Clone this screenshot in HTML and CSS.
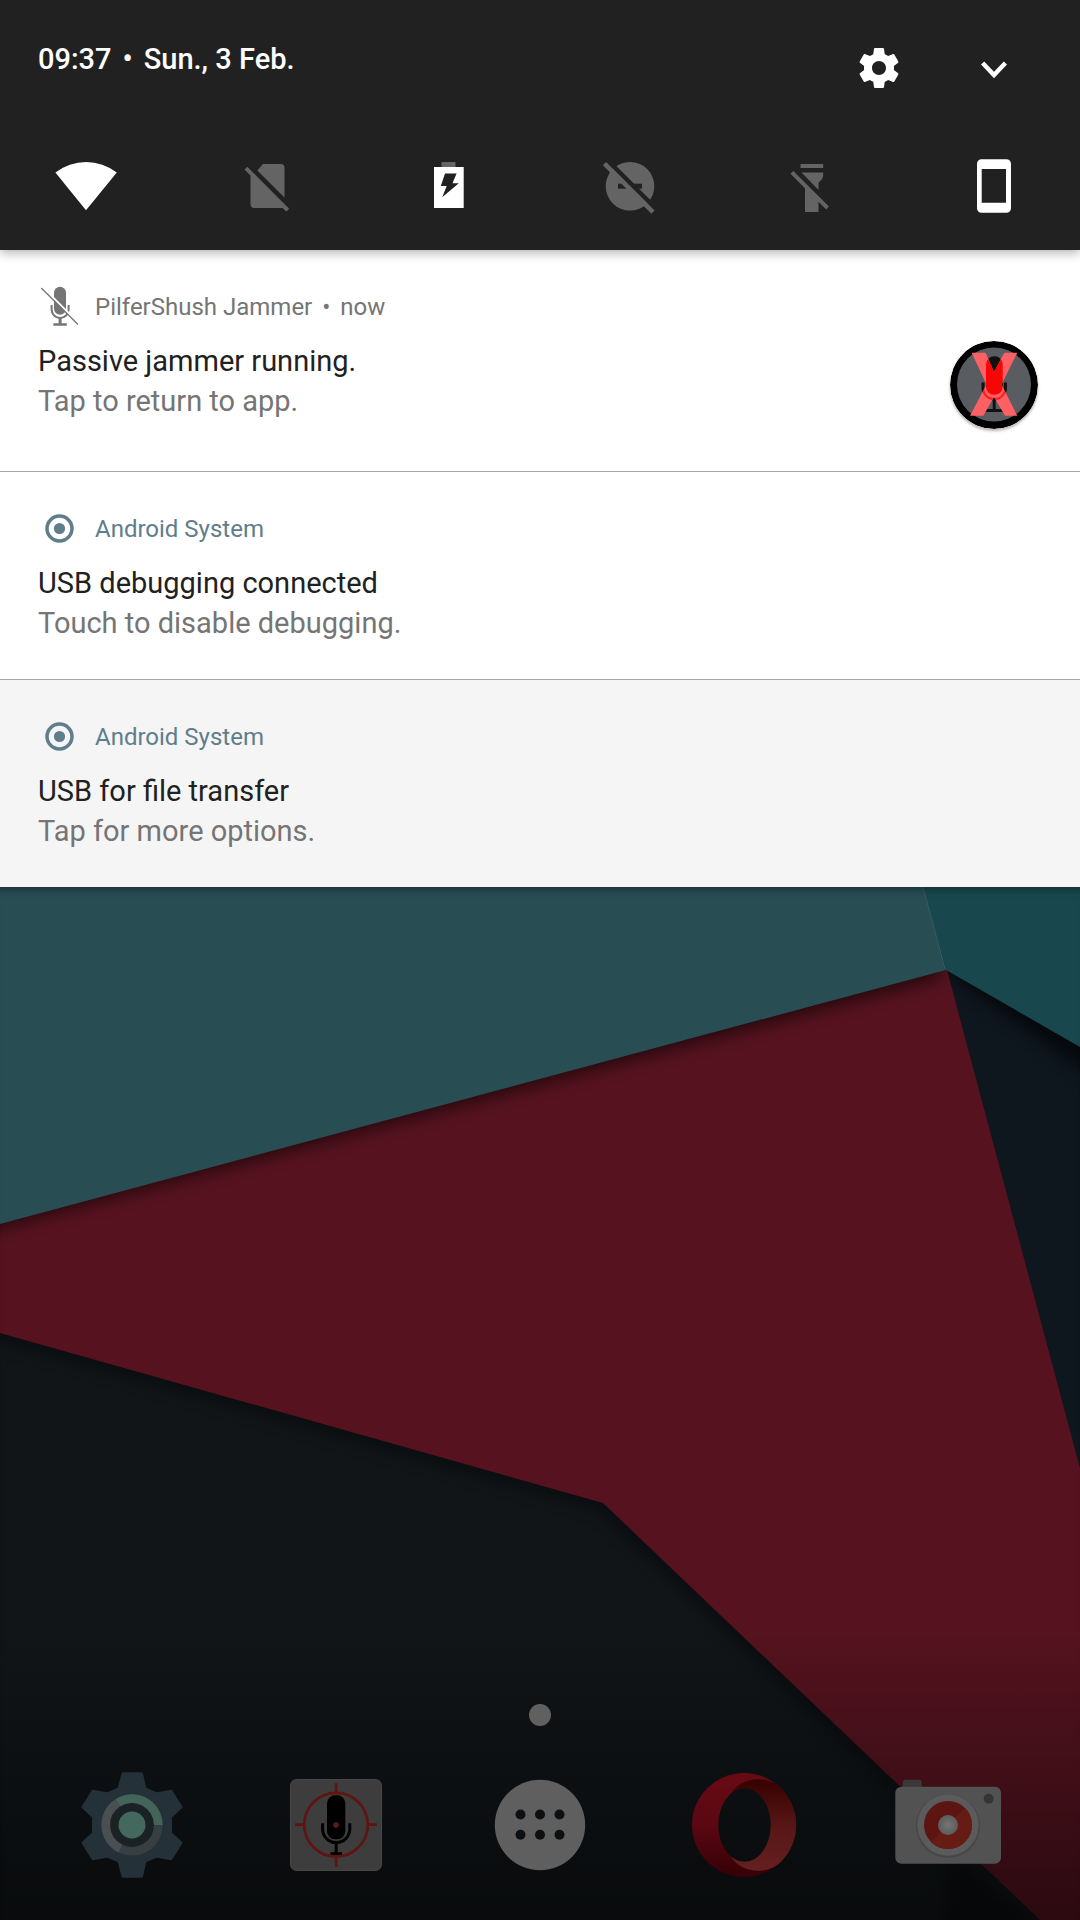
FILE: index.html
```html
<!DOCTYPE html>
<html lang="en">
<head>
<meta charset="utf-8">
<meta name="viewport" content="width=device-width, initial-scale=1">
<title>Notifications</title>
<link rel="stylesheet" href="styles.css">
</head>
<body>
<header class="shade">
  <div class="status">
    <p class="date"><time>09:37</time><span class="dot">•</span><span>Sun., 3 Feb.</span></p>
    <div class="actions">
      <button class="icon-button" type="button" aria-label="Settings">
        <svg width="48" height="48" viewBox="0 0 24 24" fill="#fff"><path d="M19.43 12.98c.04-.32.07-.64.07-.98s-.03-.66-.07-.98l2.11-1.65c.19-.15.24-.42.12-.64l-2-3.46c-.12-.22-.39-.3-.61-.22l-2.49 1c-.52-.4-1.08-.73-1.69-.98l-.38-2.65C14.46 2.18 14.25 2 14 2h-4c-.25 0-.46.18-.49.42l-.38 2.65c-.61.25-1.17.59-1.69.98l-2.49-1c-.23-.09-.49 0-.61.22l-2 3.46c-.13.22-.07.49.12.64l2.11 1.65c-.04.32-.07.65-.07.98s.03.66.07.98l-2.11 1.65c-.19.15-.24.42-.12.64l2 3.46c.12.22.39.3.61.22l2.49-1c.52.4 1.08.73 1.69.98l.38 2.65c.03.24.24.42.49.42h4c.25 0 .46-.18.49-.42l.38-2.65c.61-.25 1.17-.59 1.69-.98l2.49 1c.23.09.49 0 .61-.22l2-3.46c.12-.22.07-.49-.12-.64l-2.11-1.65zM12 15.5c-1.93 0-3.500-1.570-3.500-3.500s1.570-3.500 3.500-3.500 3.500 1.570 3.500 3.500-1.570 3.500-3.500 3.500z"/></svg>
      </button>
      <button class="icon-button" type="button" aria-label="Expand">
        <svg width="48" height="48" viewBox="0 0 48 48" fill="none" stroke="#fff" stroke-width="4.4"><path d="M12.600 19 24 31 35.400 19"/></svg>
      </button>
    </div>
  </div>
  <div class="tiles">
    <button class="tile" type="button" aria-label="Wi-Fi">
      <svg width="96" height="64" viewBox="0 0 96 64" fill="#fff"><path d="M17.4 18.5A50 50 0 0 1 78.8 18.5L48 56.2Z"/></svg>
    </button>
    <button class="tile" type="button" aria-label="No SIM">
      <svg width="96" height="64" viewBox="0 0 96 64" fill="#646464"><path d="M43 10H61a3.500 3.500 0 0 1 3.500 3.500V43.500L37.300 16.500ZM24.500 15.500 27.300 12.700 69.200 54.800 66.400 57.600 62.500 54H34.500A4 4 0 0 1 30.500 50V21.500Z"/></svg>
    </button>
    <button class="tile" type="button" aria-label="Battery">
      <svg width="96" height="64" viewBox="0 0 96 64"><path fill="#666" d="M40.500 8H54.500V13H40.500Z"/><path fill="#fff" d="M33 13H62.700V54H33Z"/><path fill="#212121" d="M44 19.500H55.600L51.500 29.300H57.800L41.200 43.300 45.700 32H39.800Z"/></svg>
    </button>
    <button class="tile" type="button" aria-label="Do not disturb">
      <svg width="96" height="64" viewBox="0 0 96 64"><circle cx="47" cy="32.300" r="24.300" fill="#646464"/><path fill="#212121" d="M35 29.700H59V34.700H35Z"/><path stroke="#212121" stroke-width="4.600" d="M23 4.800 75 56.800"/><path stroke="#646464" stroke-width="4.600" d="M21.500 9.600 70 58.100"/></svg>
    </button>
    <button class="tile" type="button" aria-label="Flashlight">
      <svg width="96" height="64" viewBox="0 0 96 64" fill="#646464"><path d="M36.500 10H59.200V14H36.500ZM37.500 18.500H59.200V21.500Q59 25 54.500 28.500V36ZM26.500 19.700 29.300 17 64.900 52.600 62.200 55.400 54.500 47.700V58H41V34.200Z"/></svg>
    </button>
    <button class="tile" type="button" aria-label="Portrait">
      <svg width="96" height="64" viewBox="0 0 96 64"><path fill="#fff" fill-rule="evenodd" d="M35.500 5.300H60.500a4.500 4.500 0 0 1 4.500 4.500V54.200a4.500 4.500 0 0 1-4.500 4.500H35.500a4.500 4.500 0 0 1-4.500-4.500V9.800a4.500 4.500 0 0 1 4.500-4.500ZM35.700 15V48.700H60V15Z"/></svg>
    </button>
  </div>
</header>

<main class="notifications">
  <article class="note note-tall">
    <div class="source">
      <svg width="42" height="42" viewBox="0 0 42 42" fill="none" stroke="#757575"><rect x="16" y=".7" width="12" height="28" rx="6" fill="#757575" stroke="none"/><path stroke-width="2" d="M13.600 19V23.500a8.500 8.500 0 0 0 17 0V19"/><path stroke-width="3" d="M22.100 32V38"/><path stroke-width="2.500" d="M15.400 38.500H28.800"/><path stroke="#fff" stroke-width="2" d="M5 1.500 41 37.500"/><path stroke-width="1.300" d="M3.300 2 40 38.500"/></svg>
      <span>PilferShush Jammer</span><span class="dot-small">•</span><span>now</span>
    </div>
    <div class="content">
      <div class="message">
        <h2 class="title">Passive jammer running.</h2>
        <p class="text">Tap to return to app.</p>
      </div>
      <svg class="avatar" width="88" height="88" viewBox="0 0 88 88">
        <defs>
          <clipPath id="cross"><path d="M21.700 11.700H35.500L44 31 54.300 11.700H67.300L51.500 43.500 67.300 74.700H55L44 56 33.300 74.700H20L36.500 43.500Z"/></clipPath>
        </defs>
        <circle cx="44" cy="44" r="44"/>
        <circle cx="44" cy="43.500" r="37" fill="#595d61"/>
        <g stroke="#111" fill="none"><rect x="36" y="15.300" width="16.700" height="38.500" rx="8" fill="#111" stroke="none"/><path stroke-width="3" d="M33 41.500V47a11.200 11.200 0 0 0 22.400 0V41.500M44.200 59V69M35 69.500H53"/></g>
        <g clip-path="url(#cross)"><path fill="#ff6064" d="M0 0H88V88H0Z"/><rect x="36" y="15.300" width="16.700" height="38.500" rx="8" fill="#f80505"/><path fill="none" stroke="#f82020" stroke-width="2" d="M33 41.500V47a11.200 11.200 0 0 0 22.400 0V41.500"/></g>
      </svg>
    </div>
  </article>
  <article class="note">
    <div class="source source-system">
      <svg width="42" height="42" viewBox="0 0 42 42"><circle cx="21.500" cy="20.500" r="12.500" fill="none" stroke="#607d8b" stroke-width="3.500"/><circle cx="21.500" cy="20.500" r="5.600" fill="#607d8b"/></svg>
      <span>Android System</span>
    </div>
    <div class="content">
      <div class="message">
        <h2 class="title">USB debugging connected</h2>
        <p class="text">Touch to disable debugging.</p>
      </div>
    </div>
  </article>
  <article class="note note-muted">
    <div class="source source-system">
      <svg width="42" height="42" viewBox="0 0 42 42"><circle cx="21.500" cy="20.500" r="12.500" fill="none" stroke="#607d8b" stroke-width="3.500"/><circle cx="21.500" cy="20.500" r="5.600" fill="#607d8b"/></svg>
      <span>Android System</span>
    </div>
    <div class="content">
      <div class="message">
        <h2 class="title">USB for file transfer</h2>
        <p class="text">Tap for more options.</p>
      </div>
    </div>
  </article>
</main>

<section class="home" aria-label="Home screen">
  <svg class="wallpaper" viewBox="0 887 1080 1033" preserveAspectRatio="none" aria-hidden="true">
    <defs>
      <filter id="soft" x="-10%" y="-10%" width="120%" height="120%"><feGaussianBlur stdDeviation="8"/></filter>
      <clipPath id="redSheet"><path d="M0 1223 947 970 1080 1468V1920H1040L603 1503 0 1333Z"/></clipPath>
      <clipPath id="navySheet"><path d="M947 970 1080 1047V1468Z"/></clipPath>
      <linearGradient id="fade" x1="0" y1="0" x2="0" y2="1"><stop offset="0" stop-color="#000" stop-opacity="0"/><stop offset="1" stop-color="#000" stop-opacity=".5"/></linearGradient>
    </defs>
    <path fill="#111518" d="M0 887H1080V1920H0Z"/>
    <path filter="url(#soft)" opacity=".35" d="M-40 1225 947 990V1960H1070L598 1510-40 1330Z"/>
    <path fill="#0e161e" d="M947 970 1080 1047V1468Z"/>
    <g clip-path="url(#navySheet)"><path filter="url(#soft)" opacity=".6" d="M930 940 1100 1030V1082L947 972Z"/></g>
    <path fill="#56131f" d="M0 1223 947 970 1080 1468V1920H1040L603 1503 0 1333Z"/>
    <g clip-path="url(#redSheet)"><path filter="url(#soft)" opacity=".55" d="M-40 1180 940 940 942 978-40 1239Z"/></g>
    <path fill="#284d53" d="M0 887H924L946 970 0 1224Z"/>
    <path fill="#18484e" d="M923 887H1080V1047L946 970Z"/>
    <path fill="none" stroke="#345c61" d="M923 887 945 969"/>
    <path fill="url(#fade)" d="M0 1620H1080V1920H0Z"/>
  </svg>
  <div class="pager"></div>
  <nav class="dock">
    <button class="app" type="button" aria-label="Settings app">
      <svg width="110" height="110" viewBox="0 0 110 110"><path fill="#253138" stroke="#253138" stroke-width="3" stroke-linejoin="round" d="M46 3.800H64.500L68 19 79.500 24 94 21.200 104 37 93.500 47V63L104 73 94 88.800 79.500 86 68 91 64.500 106.200H46L42 91 30.500 86 16 88.800 6 73 16.500 63V47L6 37 16 21.200 30.500 24 42 19Z"/><circle cx="55" cy="55" r="23" fill="#1a2226"/><g fill="none" stroke-width="8.700"><path stroke="#426459" d="M40.700 32.900A26.300 26.300 0 0 1 81.300 55"/><path stroke="#373f43" d="M81.300 55A26.300 26.300 0 0 1 43.500 78.600"/><path stroke="#4a4f51" d="M43.500 78.600A26.300 26.300 0 0 1 40.700 32.900"/></g><circle cx="55" cy="55" r="13.500" fill="#44675e"/></svg>
    </button>
    <button class="app" type="button" aria-label="PilferShush">
      <svg width="110" height="110" viewBox="0 0 110 110"><rect x="9.500" y="9.500" width="91" height="91" rx="6" fill="#3d3d3d" stroke="#484848"/><rect x="46" y="25.300" width="18.300" height="44" rx="8"/><path fill="none" stroke="#000" stroke-width="3" d="M41.600 53.300V59a13.600 13.600 0 0 0 27.200 0V53.300M55.200 73V84M49.500 83.800H61"/><g fill="none" stroke="#5e1512" stroke-width="2.800"><circle cx="55" cy="54.700" r="31.800"/><path d="M14 54.700H24M87 54.700H96M55.200 13.300V23M55.200 86.500V97"/></g><circle cx="55" cy="55" r="2.800" fill="#5e1c14"/></svg>
    </button>
    <button class="app" type="button" aria-label="All apps">
      <svg width="110" height="110" viewBox="0 0 110 110"><circle cx="55" cy="55" r="45.200" fill="#5f5f5f"/><g fill="#0d1012"><circle cx="35.500" cy="44.500" r="5"/><circle cx="55" cy="44.500" r="5"/><circle cx="74.500" cy="44.500" r="5"/><circle cx="35.500" cy="64.700" r="5"/><circle cx="55" cy="64.700" r="5"/><circle cx="74.500" cy="64.700" r="5"/></g></svg>
    </button>
    <button class="app" type="button" aria-label="Opera">
      <svg width="110" height="110" viewBox="0 0 110 110">
        <defs>
          <linearGradient id="ringLeft" x1="0" y1="0" x2="0" y2="1"><stop offset="0" stop-color="#690a15"/><stop offset=".5" stop-color="#5a0812"/><stop offset="1" stop-color="#350005"/></linearGradient>
          <linearGradient id="ringRight" x1="0" y1="0" x2="0" y2="1"><stop offset="0" stop-color="#360000"/><stop offset=".5" stop-color="#571615"/><stop offset="1" stop-color="#651f20"/></linearGradient>
          <mask id="hole"><path fill="#fff" d="M0 0H110V110H0Z"/><ellipse cx="55.500" cy="55" rx="26.200" ry="36.700"/></mask>
        </defs>
        <g mask="url(#hole)"><circle cx="55" cy="55" r="52" fill="url(#ringLeft)"/><path fill="url(#ringRight)" d="M42 23C52 8 74 5 89 15.500A52 52 0 0 1 89 94.500C74 105 52 102 42 87Z"/></g>
      </svg>
    </button>
    <button class="app" type="button" aria-label="Camera">
      <svg width="110" height="110" viewBox="0 0 110 110">
        <defs><radialGradient id="lens"><stop offset="0" stop-color="#757575"/><stop offset="1" stop-color="#5c5c5c"/></radialGradient></defs>
        <rect x="9.700" y="9.700" width="19" height="14" rx="3" fill="#393939"/><rect x="2.300" y="16.700" width="105.700" height="77" rx="6" fill="#525252"/><circle cx="55" cy="56" r="32" fill="#474747"/><circle cx="55" cy="55" r="30.700" fill="#5b5b5b"/><circle cx="55" cy="55" r="24" fill="#5d1512"/><path fill="#661c14" d="M72 38A24 24 0 0 1 38 72Z"/><circle cx="55" cy="55" r="10" fill="url(#lens)"/><circle cx="95.700" cy="28.700" r="5" fill="#353535"/></svg>
    </button>
  </nav>
</section>
</body>
</html>
```
FILE: styles.css
```css
* {
  box-sizing: border-box;
}

body {
  margin: 0;
  min-height: 100vh;
  display: flex;
  flex-direction: column;
  background: #0f1316;
  font-family: Roboto, "Liberation Sans", sans-serif;
}

h2,
p {
  margin: 0;
}

svg {
  display: block;
  flex: none;
}

button {
  display: flex;
  align-items: center;
  justify-content: center;
  padding: 0;
  border: 0;
  background: none;
  cursor: pointer;
}

/* Quick settings */
.shade {
  position: relative;
  z-index: 1;
  display: flex;
  flex-direction: column;
  gap: 56px;
  padding: 38px 38px 32px;
  background: #212121;
  box-shadow: 0 3px 10px rgba(0, 0, 0, 0.3);
}

.status {
  display: flex;
  justify-content: space-between;
}

.date {
  display: flex;
  gap: 11px;
  color: #fff;
  font-size: 29px;
  font-weight: 500;
  line-height: 42px;
}

.actions {
  display: flex;
  gap: 19px;
}

.icon-button {
  width: 96px;
  height: 60px;
}

.tiles {
  display: flex;
  justify-content: space-between;
}

/* Notifications */
.note {
  padding: 36px 38px;
  background: #fff;
}

.note + .note {
  border-top: 1px solid #a6a6a6;
}

.note-tall {
  padding-bottom: 42px;
}

.note-muted {
  background: #f5f5f5;
}

.source {
  display: flex;
  align-items: center;
  height: 42px;
  color: #757575;
  font-size: 24px;
  line-height: 44px;
}

.source svg {
  margin-right: 15px;
}

.source-system {
  color: #607d8b;
}

.dot-small {
  margin: 0 10px;
}

.content {
  display: flex;
  justify-content: space-between;
  margin-top: 13px;
}

.title,
.text {
  font-size: 29px;
  font-weight: 400;
  line-height: 40px;
}

.title {
  color: #212121;
}

.text {
  color: #757575;
}

.avatar {
  margin-right: 4px;
  border-radius: 50%;
  box-shadow: 0 2px 3px rgba(0, 0, 0, 0.3);
}

/* Home screen behind the shade */
.home {
  position: relative;
  flex: 1;
  display: flex;
  flex-direction: column;
  justify-content: flex-end;
  align-items: center;
  gap: 44px;
  padding: 40px 30px;
  box-shadow: inset 0 10px 8px -8px rgba(0, 0, 0, 0.4);
}

.wallpaper {
  position: absolute;
  inset: 0;
  z-index: -1;
  width: 100%;
  height: 100%;
}

.pager {
  width: 22px;
  height: 22px;
  border-radius: 50%;
  background: #606060;
}

.dock {
  display: flex;
  justify-content: space-around;
  width: 100%;
}
```
